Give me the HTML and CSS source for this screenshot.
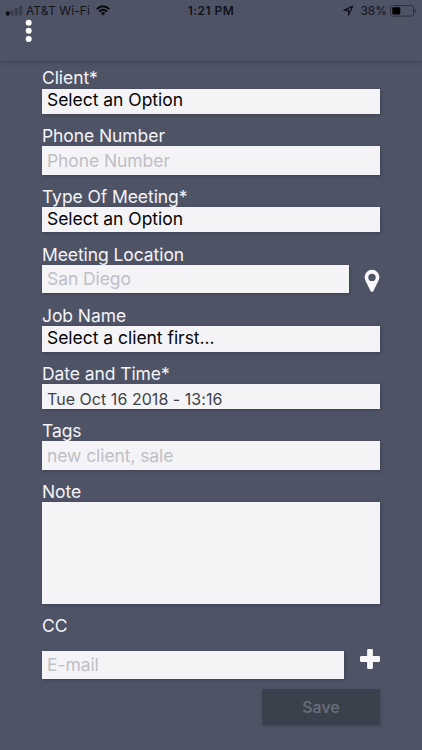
FILE: index.html
```html
<!DOCTYPE html>
<html lang="en">
<head>
<meta charset="utf-8">
<meta name="viewport" content="width=device-width, initial-scale=1">
<title>Meeting</title>
<link rel="stylesheet" href="styles.css">
</head>
<body>
<header class="topbar">
  <div class="status">
    <div class="status-left">
      <svg class="signal" width="17" height="10" viewBox="0 0 17 10"><rect x="0" y="5.5" width="3.4" height="4" rx=".8" fill="#08090c"/><g fill="#383c4b"><rect x="4.4" y="4" width="3.3" height="5.5" rx=".8"/><rect x="8.7" y="2" width="3.3" height="7.5" rx=".8"/><rect x="13" y="0" width="3.3" height="9.5" rx=".8"/></g></svg>
      <span class="carrier">AT&amp;T Wi-Fi</span>
      <svg class="wifi" width="14" height="11" viewBox="0 0 14 11"><g fill="none" stroke="#08090c" stroke-width="1.9"><path d="M.7 4.1Q7-1.8 13.3 4.1"/><path d="M3 6.5Q7 2.8 11 6.5"/></g><path d="M4.7 8.1Q7 6.1 9.3 8.1L7 10.5Z" fill="#08090c"/></svg>
    </div>
    <span class="clock">1:21 PM</span>
    <div class="status-right">
      <svg class="nav" width="11" height="11" viewBox="0 0 11 11"><path d="M1 5.4 9.7 1.2 5.6 9.8V5.5Z" fill="none" stroke="#11131a" stroke-width="1.3" stroke-linejoin="round"/></svg>
      <span class="percent">38%</span>
      <svg class="battery" width="27" height="12" viewBox="0 0 27 12"><rect x=".5" y=".5" width="23" height="10.6" rx="2.4" fill="none" stroke="#2c303c"/><rect x="2.3" y="2.2" width="8" height="7.2" rx=".8" fill="#000"/><path d="M24.8 3.8q1.7.4 1.7 2t-1.7 2z" fill="#2c303c"/></svg>
    </div>
  </div>
  <svg class="menu" width="8" height="24" viewBox="0 0 8 24" fill="#fff"><circle cx="3.7" cy="3.7" r="3"/><circle cx="3.7" cy="11.8" r="3"/><circle cx="3.7" cy="20" r="3"/></svg>
</header>
<main class="form">
  <div class="field client"><label class="label"><span>Client*</span></label><div class="box select"><span>Select an Option</span></div></div>
  <div class="field phone"><label class="label"><span>Phone Number</span></label><div class="box input"><span>Phone Number</span></div></div>
  <div class="field type"><label class="label"><span>Type Of Meeting*</span></label><div class="box select"><span>Select an Option</span></div></div>
  <div class="field location"><label class="label"><span>Meeting Location</span></label>
    <div class="row"><div class="box input"><span>San Diego</span></div>
    <svg class="pin" width="16" height="24" viewBox="0 0 16 24"><path fill="#f8f8fb" fill-rule="evenodd" d="M8 .8A7.3 7.3 0 0 0 .6 8.1C.6 11.6 4 16 6.1 21.3Q6.8 23 8 23T9.9 21.3C12 16 15.4 11.6 15.4 8.1A7.3 7.3 0 0 0 8 .8ZM8 4.7A3.7 3.7 0 1 1 8 12.1A3.7 3.7 0 0 1 8 4.7Z"/></svg></div></div>
  <div class="field job"><label class="label"><span>Job Name</span></label><div class="box select"><span>Select a client first...</span></div></div>
  <div class="field date"><label class="label"><span>Date and Time*</span></label><div class="box datebox"><span>Tue Oct 16 2018 - 13:16</span></div></div>
  <div class="field tags"><label class="label"><span>Tags</span></label><div class="box input"><span>new client, sale</span></div></div>
  <div class="field note"><label class="label"><span>Note</span></label><div class="box"></div></div>
  <div class="field cc"><label class="label"><span>CC</span></label>
    <div class="row"><div class="box input"><span>E-mail</span></div>
    <svg class="plus" width="20" height="20" viewBox="0 0 20 20" fill="#f8f8fb"><rect x="7.1" y="0" width="5.8" height="20" rx="1.3"/><rect x="0" y="7.1" width="20" height="5.8" rx="1.3"/></svg></div></div>
  <button class="save">Save</button>
</main>
</body>
</html>
```
FILE: styles.css
```css
* { box-sizing: border-box; }
body {
  margin: 0;
  height: 750px;
  overflow: hidden;
  background: #4f5366;
  font-family: Inter, "Liberation Sans", sans-serif;
}
svg { display: block; flex: none; }
.topbar {
  height: 61px;
  background: #4f5366;
  box-shadow: 0 1px 4px rgba(30, 36, 45, .35);
}
.status {
  height: 20px;
  display: grid;
  grid-template-columns: 1fr auto 1fr;
  color: #11131a;
  font-size: 12px;
  line-height: 21px;
}
.status-left, .status-right { display: flex; align-items: center; }
.status-left { padding-left: 6px; }
.status-right { justify-content: flex-end; padding-right: 5px; }
.carrier { margin-left: 3px; letter-spacing: .1px; }
.wifi { margin-left: 6px; }
.clock { font-weight: 600; letter-spacing: .45px; }
.percent { margin: 0 3px 0 6px; }
.menu { margin-left: 25px; margin-top: -1px; }
.form {
  padding: 8px 42px 0;
  display: flex;
  flex-direction: column;
}
.label {
  display: block;
  height: 20px;
  font-size: 17.5px;
  letter-spacing: -.08px;
  line-height: 19px;
  color: #f4f4f8;
  white-space: nowrap;
}
.client .label { line-height: 17px; }
.box {
  height: 25px;
  padding-left: 5px;
  background: #f4f4f7;
  box-shadow: 1px 1px 3px rgba(35, 42, 50, .4);
  white-space: nowrap;
  font-size: 17.5px;
  letter-spacing: -.03px;
}
.select { color: #050505; line-height: 23px; }
.client .select { line-height: 22px; }
.input { height: 29px; color: #bfbfc6; line-height: 30px; letter-spacing: -.08px; }
.location .input, .cc .input { line-height: 28px; }
.datebox { color: #3f4149; font-size: 16px; line-height: 30px; letter-spacing: .04px; }
.row { display: flex; }
.row .box { flex: 1; }
.client, .phone, .job, .date, .tags, .note { margin-bottom: 12px; }
.type, .location { margin-bottom: 13px; }
.location .box { height: 28px; }
.job .box { height: 26px; }
.note .box { height: 102px; }
.pin { margin: 4px 0 0 15px; }
.cc .label { height: 35px; }
.cc .box { height: 28px; }
.plus { margin: -2px 0 0 16px; }
.save {
  align-self: flex-end;
  width: 118px;
  height: 36px;
  margin-top: 10px;
  padding: 0;
  border: 0;
  background: #3b414c;
  box-shadow: 1px 1px 3px rgba(35, 42, 50, .35);
  color: #6a6e79;
  font: 500 16px/36px Inter, sans-serif;
}
```
